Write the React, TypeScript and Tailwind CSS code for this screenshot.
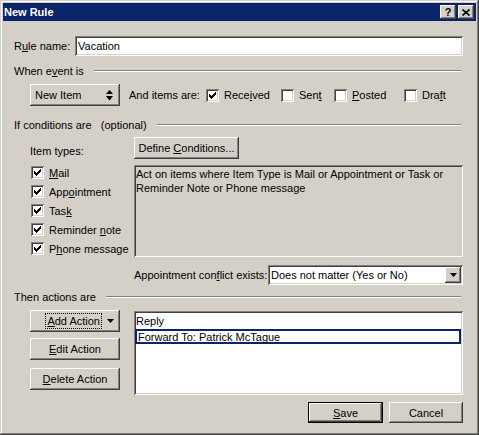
import React from 'react';

const raised = 'shadow-[inset_-1px_-1px_#404040,inset_1px_1px_#ffffff,inset_-2px_-2px_#808080,inset_2px_2px_#d4d0c8]';
const sunken = 'shadow-[inset_1px_1px_#808080,inset_-1px_-1px_#ffffff,inset_2px_2px_#404040,inset_-2px_-2px_#d4d0c8]';

const Check = ({ checked }: { checked?: boolean }) => (
    <span className={`w-[13px] h-[13px] bg-white shrink-0 flex items-center justify-center ${sunken}`}>
        {checked && (
            <svg width="7" height="7" viewBox="0 0 7 7" shapeRendering="crispEdges">
                <polygon points="0,2 2,4 7,-1 7,2 2,7 0,5" fill="#000" />
            </svg>
        )}
    </span>
);

const Sep = ({ children }: { children: React.ReactNode }) => (
    <div className="flex items-center h-[14px]">
        <span className="whitespace-pre">{children}</span>
        <div className="flex-1 ml-[10px] mr-[2px] border-t border-t-[#808080] border-b border-b-white" />
    </div>
);

const Btn = ({ children, className = '' }: { children: React.ReactNode; className?: string }) => (
    <div className={`bg-[#d4d0c8] flex items-center justify-center whitespace-nowrap ${raised} ${className}`}>{children}</div>
);

const ItemType = ({ children }: { children: React.ReactNode }) => (
    <div className="h-[19px] flex items-center gap-[5px] pl-[1px]">
        <Check checked />
        <span>{children}</span>
    </div>
);

export default function App() {
    return (
        <div className="w-[479px] h-[435px] bg-[#d4d0c8] p-[3px] flex flex-col font-['Liberation_Sans',Arial,sans-serif] text-[11px] leading-[14px] text-black shadow-[inset_-1px_-1px_#404040,inset_1px_1px_#d4d0c8,inset_-2px_-2px_#808080,inset_2px_2px_#ffffff]">
            {/* TITLE BAR */}
            <div className="h-[18px] bg-[#0a246a] flex items-center pl-[1px] pr-[2px]">
                <span className="text-white font-bold">New Rule</span>
                <div className="ml-auto flex gap-[2px]">
                    <Btn className="w-[16px] h-[14px] font-bold text-[11px] leading-none">?</Btn>
                    <Btn className="w-[16px] h-[14px]">
                        <svg width="8" height="7" viewBox="0 0 8 7">
                            <path d="M0.5 0.5 L7.5 6.5 M7.5 0.5 L0.5 6.5" stroke="#000" strokeWidth="1.6" />
                        </svg>
                    </Btn>
                </div>
            </div>

            {/* BODY */}
            <div className="flex flex-col pl-[11px] pr-[13px]">
                <div className="mt-[15px] h-[20px] flex items-center">
                    <span>R<u>u</u>le name:</span>
                    <div className={`ml-auto w-[388px] h-[20px] bg-white flex items-center pl-[3px] ${sunken}`}>Vacation</div>
                </div>

                <div className="mt-[8px]">
                    <Sep>When e<u>v</u>ent is</Sep>
                </div>

                <div className="mt-[6px] h-[22px] pl-[16px] flex items-center whitespace-nowrap">
                    <Btn className="w-[90px] h-[22px] !justify-start pl-[5px] pr-[7px]">
                        <span>New Item</span>
                        <svg className="ml-auto" width="7" height="11" viewBox="0 0 7 11">
                            <polygon points="3.5,0 7,4 0,4" fill="#000" />
                            <polygon points="0,6 7,6 3.5,10.5" fill="#000" />
                        </svg>
                    </Btn>
                    <span className="ml-[9px] w-[77px] shrink-0">And items are:</span>
                    <div className="w-[75px] flex items-center gap-[5px]">
                        <Check checked />
                        <span>Rece<u>i</u>ved</span>
                    </div>
                    <div className="w-[53px] flex items-center gap-[5px]">
                        <Check />
                        <span>Sen<u>t</u></span>
                    </div>
                    <div className="w-[70px] flex items-center gap-[5px]">
                        <Check />
                        <span><u>P</u>osted</span>
                    </div>
                    <div className="flex items-center gap-[5px]">
                        <Check />
                        <span>Dra<u>f</u>t</span>
                    </div>
                </div>

                <div className="mt-[12px]">
                    <Sep>If conditions are   (optional)</Sep>
                </div>

                {/* CONDITIONS */}
                <div className="mt-[5px] pl-[16px] flex">
                    <div className="w-[104px] flex flex-col">
                        <span className="mt-[7px]">Item types:</span>
                        <div className="mt-[5px] flex flex-col">
                            <ItemType><u>M</u>ail</ItemType>
                            <ItemType>App<u>o</u>intment</ItemType>
                            <ItemType>Tas<u>k</u></ItemType>
                            <ItemType>Reminder <u>n</u>ote</ItemType>
                            <ItemType>P<u>h</u>one message</ItemType>
                        </div>
                    </div>
                    <div className="flex-1 flex flex-col">
                        <Btn className="w-[105px] h-[22px]"><span>Define <u>C</u>onditions...</span></Btn>
                        <div className={`mt-[6px] h-[92px] bg-[#d4d0c8] pl-[2px] pt-[2px] ${sunken}`}>
                            Act on items where Item Type is Mail or Appointment or Task or
                            <br />
                            Reminder Note or Phone message
                        </div>
                    </div>
                </div>

                <div className="mt-[7px] h-[20px] pl-[120px] flex items-center">
                    <span>Appointment con<u>f</u>lict exists:</span>
                    <div className={`ml-auto w-[195px] h-[20px] bg-white flex items-center pl-[3px] pr-[2px] ${sunken}`}>
                        <span>Does not matter (Yes or No)</span>
                        <Btn className="ml-auto w-[16px] h-[16px]">
                            <svg width="7" height="4" viewBox="0 0 7 4">
                                <polygon points="0,0 7,0 3.5,4" fill="#000" />
                            </svg>
                        </Btn>
                    </div>
                </div>

                <div className="mt-[5px]">
                    <Sep>Then actions are</Sep>
                </div>

                {/* ACTIONS */}
                <div className="mt-[6px] pl-[16px] flex">
                    <div className="w-[104px] flex flex-col">
                        <Btn className="w-[90px] h-[22px] pl-[3px] pr-[6px]">
                            <span className="ml-auto px-[1px] outline outline-1 outline-dotted outline-black outline-offset-[0px]"><u>A</u>dd Action</span>
                            <svg className="ml-[6px]" width="7" height="4" viewBox="0 0 7 4">
                                <polygon points="0,0 7,0 3.5,4" fill="#000" />
                            </svg>
                        </Btn>
                        <Btn className="mt-[6px] w-[90px] h-[22px]"><span><u>E</u>dit Action</span></Btn>
                        <Btn className="mt-[8px] w-[90px] h-[22px]"><span><u>D</u>elete Action</span></Btn>
                    </div>
                    <div className={`mt-[1px] flex-1 h-[84px] bg-white px-[1px] pt-[2px] ${sunken}`}>
                        <div className="h-[16px] pl-[1px] flex items-center">Reply</div>
                        <div className="h-[15px] pl-[1px] flex items-center border-2 border-[#0a246a] mr-[1px]">Forward To: Patrick McTague</div>
                    </div>
                </div>

                <div className="mt-[7px] flex justify-end gap-[6px]">
                    <div className="w-[75px] h-[21px] border border-black">
                        <Btn className="w-full h-full"><span><u>S</u>ave</span></Btn>
                    </div>
                    <Btn className="w-[74px] h-[21px]">Cancel</Btn>
                </div>
            </div>
        </div>
    );
}
